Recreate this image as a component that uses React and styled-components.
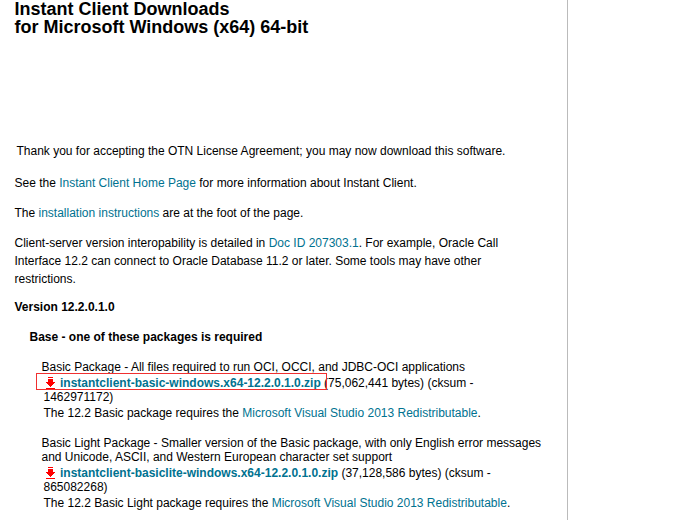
import React from 'react';
import styled, { createGlobalStyle } from 'styled-components';

const GlobalStyle = createGlobalStyle`
  body {
    margin: 0;
    background: #fff;
    overflow: hidden;
  }
`;

const Page = styled.main`
  box-sizing: border-box;
  width: 568px;
  height: 520px;
  overflow: hidden;
  border-right: 1px solid #bbb;
  background: #fff;
  color: #000;
  font: 12px/18px "Liberation Sans", Arial, sans-serif;
  white-space: nowrap;
`;

const Title = styled.h1`
  margin: 0 0 106px 14.5px;
  font-size: 18px;
  line-height: 18px;
  font-weight: bold;
`;

const Notice = styled.p`
  margin: 0 0 14px 16.5px;
`;

const Paragraph = styled.p`
  margin: 0 0 ${(p) => p.$gap ?? 12}px 14.5px;
`;

const Heading = styled.h2`
  margin: 0 0 ${(p) => p.$gap}px ${(p) => p.$indent}px;
  font-size: 12px;
  line-height: 18px;
  font-weight: bold;
`;

const Package = styled.section`
  margin: 0 0 16px 42px;
  line-height: 14px;
`;

const Description = styled.p`
  margin: 0 0 2px -0.5px;
`;

const Details = styled.p`
  margin: 0 0 2px 1.5px;
`;

const FileRow = styled.div`
  position: relative;
  display: flex;
  height: 14px;
  padding-left: 4px;
`;

const Highlight = styled.span`
  position: absolute;
  left: -6px;
  top: -3px;
  box-sizing: border-box;
  width: 291px;
  height: 17px;
  border: 1px solid #f03030;
`;

const Icon = styled.svg`
  flex: none;
  width: 9px;
  height: 12px;
  margin: 1px 5px 0 0;
`;

const Link = styled.a`
  color: #007290;
  text-decoration: none;
`;

const FileLink = styled(Link)`
  font-weight: bold;
  margin-right: 3.3px;
`;

function DownloadIcon() {
  return (
    <Icon viewBox="0 0 9 12" shapeRendering="crispEdges" aria-hidden="true">
      <path fill="#f00" d="M2 0h5v1H2zM2 2h5v3h2v1H8v1H7v1H6v1H5v1H4V9H3V8H2V7H1V6H0V5h2zM0 11h9v1H0z" />
    </Icon>
  );
}

function Download({ name, size, marked }) {
  return (
    <FileRow>
      <DownloadIcon />
      <FileLink>{name}</FileLink>
      <span>{size} (cksum -</span>
      {marked && <Highlight />}
    </FileRow>
  );
}

export default function App() {
  return (
    <>
      <GlobalStyle />
      <Page>
        <Title>
          Instant Client Downloads<br />
          for Microsoft Windows (x64) 64-bit
        </Title>
        <Notice>
          Thank you for accepting the OTN License Agreement; you may now download this software.
        </Notice>
        <Paragraph>
          See the <Link>Instant Client Home Page</Link> for more information about Instant Client.
        </Paragraph>
        <Paragraph>
          The <Link>installation instructions</Link> are at the foot of the page.
        </Paragraph>
        <Paragraph $gap={10}>
          Client-server version interopability is detailed in <Link>Doc ID 207303.1</Link>. For example, Oracle Call<br />
          Interface 12.2 can connect to Oracle Database 11.2 or later. Some tools may have other<br />
          restrictions.
        </Paragraph>
        <Heading $indent={14.5} $gap={12}>Version 12.2.0.1.0</Heading>
        <Heading $indent={29.5} $gap={14}>Base - one of these packages is required</Heading>
        <Package>
          <Description>
            Basic Package - All files required to run OCI, OCCI, and JDBC-OCI applications
          </Description>
          <Download name="instantclient-basic-windows.x64-12.2.0.1.0.zip" size="(75,062,441 bytes)" marked />
          <Details>1462971172)</Details>
          <Details>
            The 12.2 Basic package requires the <Link>Microsoft Visual Studio 2013 Redistributable</Link>.
          </Details>
        </Package>
        <Package>
          <Description>
            Basic Light Package - Smaller version of the Basic package, with only English error messages<br />
            and Unicode, ASCII, and Western European character set support
          </Description>
          <Download name="instantclient-basiclite-windows.x64-12.2.0.1.0.zip" size="(37,128,586 bytes)" />
          <Details>865082268)</Details>
          <Details>
            The 12.2 Basic Light package requires the <Link>Microsoft Visual Studio 2013 Redistributable</Link>.
          </Details>
        </Package>
      </Page>
    </>
  );
}
